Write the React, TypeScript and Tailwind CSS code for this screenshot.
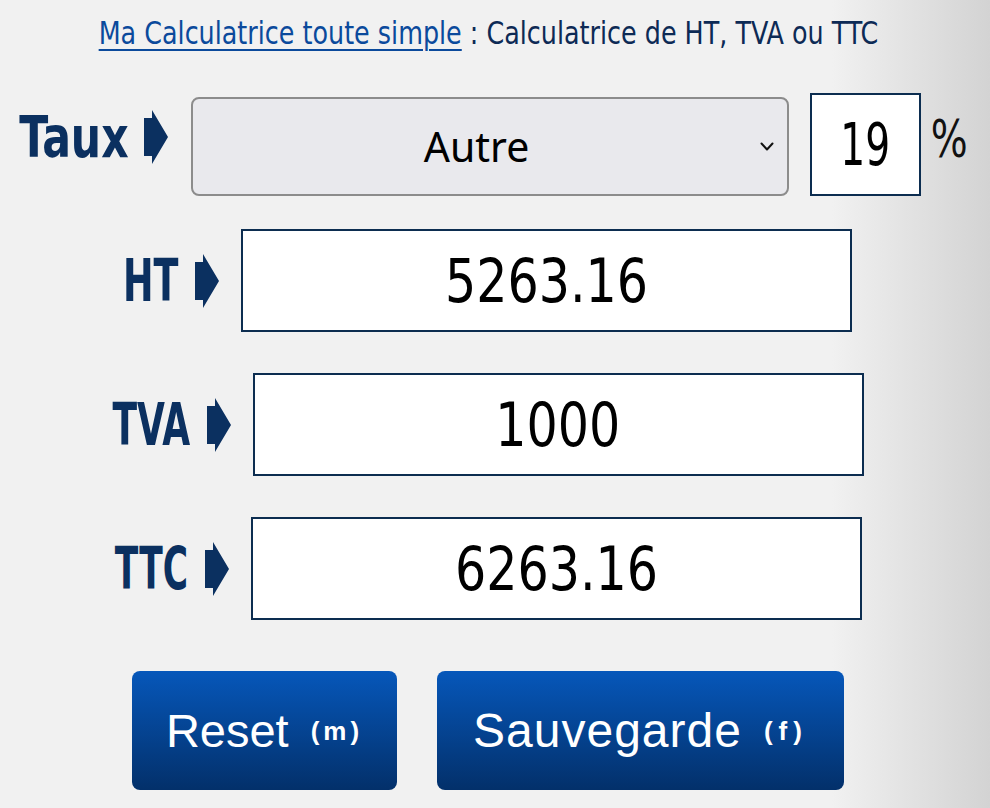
import React from "react";

const TECH = "font-['DejaVu_Sans_Condensed','DejaVu_Sans',sans-serif]";

function Arrow() {
  return (
    <svg width="24" height="54" viewBox="0 0 24 54" className="shrink-0 block">
      <polygon points="0,8 8,8 8,0 24,27 8,54 8,46 0,46" fill="#0b3060" />
    </svg>
  );
}

function Squeeze({
  box,
  scale,
  className,
  children,
}: {
  box: string;
  scale: string;
  className: string;
  children: React.ReactNode;
}) {
  return (
    <div className={`flex justify-center shrink-0 ${box}`}>
      <span className={`inline-block whitespace-nowrap ${scale} ${className}`}>
        {children}
      </span>
    </div>
  );
}

function ValueRow({
  label,
  value,
  labelBox,
  labelScale,
}: {
  label: string;
  value: string;
  labelBox: string;
  labelScale: string;
}) {
  return (
    <div className="flex items-center justify-center">
      <Squeeze
        box={labelBox}
        scale={labelScale}
        className={`${TECH} font-bold text-[58px] leading-none text-[#0b3060]`}
      >
        {label}
      </Squeeze>
      <div className="ml-[17px]">
        <Arrow />
      </div>
      <div className="ml-[22px] w-[611px] h-[103px] bg-white border-2 border-[#0c2d50] flex items-center justify-center">
        <Squeeze
          box="w-full"
          scale="scale-x-[0.895]"
          className={`${TECH} text-[61px] leading-none text-black`}
        >
          {value}
        </Squeeze>
      </div>
    </div>
  );
}

export default function App() {
  return (
    <div className="min-h-screen w-full bg-[linear-gradient(to_right,#f1f1f1_84%,#d3d3d3)]">
      <div className="w-[976px] flex flex-col">
        {/* Title */}
        <div className="pt-[17px] h-[49px]">
          <Squeeze
            box="w-full"
            scale="scale-x-[0.883]"
            className={`${TECH} text-[32px] leading-[32px] text-[#0d2a55]`}
          >
            <a
              href="#"
              className="text-[#0b4a9c] underline decoration-2 underline-offset-[5px]"
            >
              Ma Calculatrice toute simple
            </a>
            <span> : Calculatrice de HT, TVA ou TTC</span>
          </Squeeze>
        </div>

        {/* Taux row */}
        <div className="mt-[44px] pl-[10px] flex items-start justify-center h-[103px]">
          <div className="h-[88px] flex items-center">
            <Squeeze
              box="w-[108px]"
              scale="scale-x-[0.83]"
              className={`${TECH} font-bold text-[57px] leading-none text-[#0b3060]`}
            >
              Taux
            </Squeeze>
            <div className="ml-[16px]">
              <Arrow />
            </div>
          </div>
          <div className="ml-[23px] mt-[4px] w-[598px] h-[99px] rounded-[8px] border-2 border-[#8c8c8c] bg-[#e9e9ed] flex items-center">
            <span className="flex-1 text-center font-['Noto_Sans',sans-serif] text-[41px] leading-none text-black">
              Autre
            </span>
            <svg width="14" height="9" viewBox="0 0 14 9" className="mr-[13px] shrink-0">
              <polyline
                points="1.5,1.5 7,7.5 12.5,1.5"
                fill="none"
                stroke="#111"
                strokeWidth="2"
                strokeLinecap="round"
                strokeLinejoin="round"
              />
            </svg>
          </div>
          <div className="ml-[21px] w-[111px] h-[103px] bg-white border-2 border-[#0c2d50] flex items-center justify-center">
            <Squeeze
              box="w-full"
              scale="scale-x-[0.75]"
              className={`${TECH} text-[58px] leading-none text-black`}
            >
              19
            </Squeeze>
          </div>
          <div className="ml-[12px] h-[92px] flex items-center">
            <Squeeze
              box="w-[33px]"
              scale="scale-x-[0.83]"
              className={`${TECH} text-[52px] leading-none text-[#111]`}
            >
              %
            </Squeeze>
          </div>
        </div>

        <div className="mt-[33px]">
          <ValueRow label="HT" value="5263.16" labelBox="w-[54px]" labelScale="scale-x-[0.7]" />
        </div>
        <div className="mt-[41px]">
          <ValueRow label="TVA" value="1000" labelBox="w-[77px]" labelScale="scale-x-[0.69]" />
        </div>
        <div className="mt-[41px]">
          <ValueRow label="TTC" value="6263.16" labelBox="w-[73px]" labelScale="scale-x-[0.66]" />
        </div>

        {/* Buttons */}
        <div className="mt-[51px] flex justify-center gap-[40px]">
          <button className="w-[265px] h-[119px] rounded-[8px] bg-[linear-gradient(to_bottom,#0657ba,#03306a)] text-white flex items-center justify-center">
            <span className="font-['Liberation_Sans',sans-serif] text-[47px] leading-none">
              Reset
            </span>
            <span className="ml-[22px] font-['Liberation_Sans',sans-serif] font-bold text-[26px] leading-none tracking-[4px]">
              (m)
            </span>
          </button>
          <button className="w-[407px] h-[119px] rounded-[8px] bg-[linear-gradient(to_bottom,#0657ba,#03306a)] text-white flex items-center justify-center">
            <span className="font-['Liberation_Sans',sans-serif] text-[48px] leading-none tracking-[1px]">
              Sauvegarde
            </span>
            <span className="ml-[22px] font-['Liberation_Sans',sans-serif] font-bold text-[26px] leading-none tracking-[6px]">
              (f)
            </span>
          </button>
        </div>
      </div>
    </div>
  );
}
